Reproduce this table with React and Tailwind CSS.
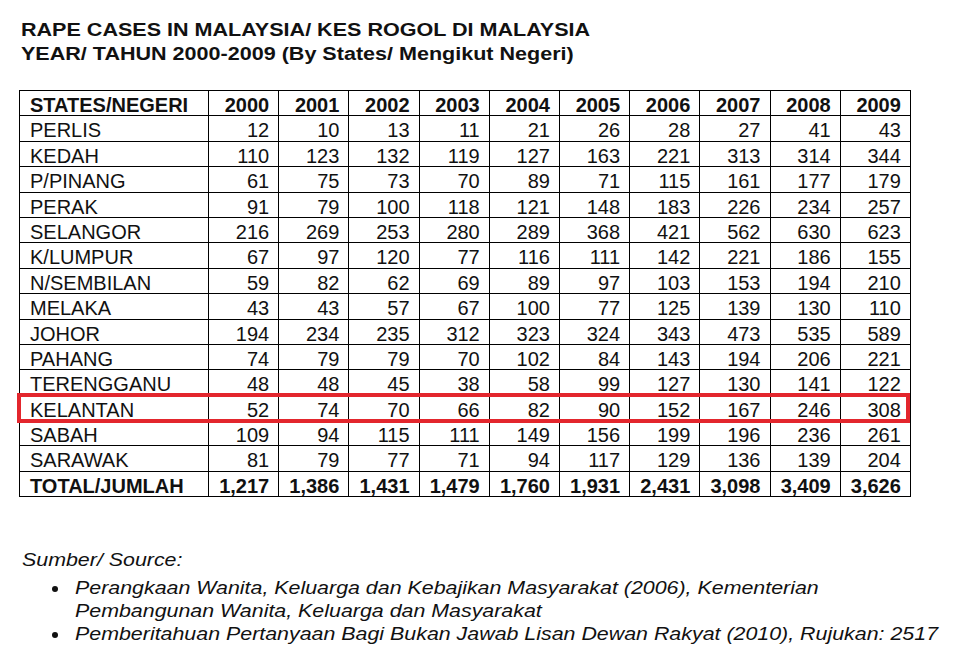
import React from "react";

const years = ["2000", "2001", "2002", "2003", "2004", "2005", "2006", "2007", "2008", "2009"];

const rows = [
    ["PERLIS", 12, 10, 13, 11, 21, 26, 28, 27, 41, 43],
    ["KEDAH", 110, 123, 132, 119, 127, 163, 221, 313, 314, 344],
    ["P/PINANG", 61, 75, 73, 70, 89, 71, 115, 161, 177, 179],
    ["PERAK", 91, 79, 100, 118, 121, 148, 183, 226, 234, 257],
    ["SELANGOR", 216, 269, 253, 280, 289, 368, 421, 562, 630, 623],
    ["K/LUMPUR", 67, 97, 120, 77, 116, 111, 142, 221, 186, 155],
    ["N/SEMBILAN", 59, 82, 62, 69, 89, 97, 103, 153, 194, 210],
    ["MELAKA", 43, 43, 57, 67, 100, 77, 125, 139, 130, 110],
    ["JOHOR", 194, 234, 235, 312, 323, 324, 343, 473, 535, 589],
    ["PAHANG", 74, 79, 79, 70, 102, 84, 143, 194, 206, 221],
    ["TERENGGANU", 48, 48, 45, 38, 58, 99, 127, 130, 141, 122],
    ["KELANTAN", 52, 74, 70, 66, 82, 90, 152, 167, 246, 308],
    ["SABAH", 109, 94, 115, 111, 149, 156, 199, 196, 236, 261],
    ["SARAWAK", 81, 79, 77, 71, 94, 117, 129, 136, 139, 204],
];

const totals = ["1,217", "1,386", "1,431", "1,479", "1,760", "1,931", "2,431", "3,098", "3,409", "3,626"];

const cell = "h-[25.4px] border border-black p-0 pt-[4px] align-top";

function Bullet() {
    return <span className="mt-[9px] ml-[33px] mr-[17px] h-[6px] w-[6px] shrink-0 rounded-full bg-[#111]" />;
}

export default function App() {
    return (
        <div className="min-h-screen overflow-hidden bg-white pl-[19px] pt-[18px] font-['Liberation_Sans',Arial,sans-serif] text-[#111]">
            {/* Title */}
            <div className="ml-[2px] w-fit origin-left scale-x-[1.197] whitespace-nowrap text-[18px] font-bold leading-[24px]">
                <div>RAPE CASES IN MALAYSIA/ KES ROGOL DI MALAYSIA</div>
                <div>YEAR/ TAHUN 2000-2009 (By States/ Mengikut Negeri)</div>
            </div>

            {/* Table */}
            <div className="relative mt-[24px] w-[891px]">
                <table className="w-[891px] table-fixed border-collapse text-[20px] leading-[20px]">
                    <colgroup>
                        <col className="w-[189px]" />
                        {years.map((y) => (
                            <col key={y} className="w-[70.2px]" />
                        ))}
                    </colgroup>
                    <thead>
                        <tr>
                            <th className={`${cell} pl-[10px] text-left font-bold`}>STATES/NEGERI</th>
                            {years.map((y) => (
                                <th key={y} className={`${cell} pr-[9px] text-right font-bold`}>
                                    {y}
                                </th>
                            ))}
                        </tr>
                    </thead>
                    <tbody>
                        {rows.map(([state, ...vals]) => (
                            <tr key={state}>
                                <td className={`${cell} pl-[10px] text-left`}>{state}</td>
                                {vals.map((v, i) => (
                                    <td key={i} className={`${cell} pr-[9px] text-right`}>
                                        {v}
                                    </td>
                                ))}
                            </tr>
                        ))}
                        <tr>
                            <td className={`${cell} pl-[10px] text-left font-bold`}>TOTAL/JUMLAH</td>
                            {totals.map((t, i) => (
                                <td key={i} className={`${cell} pr-[9px] text-right font-bold`}>
                                    {t}
                                </td>
                            ))}
                        </tr>
                    </tbody>
                </table>

                {/* highlight round Kelantan */}
                <div className="pointer-events-none absolute left-[-2px] top-[303px] h-[30px] w-[893px] border-4 border-[#e3262d]" />
            </div>

            {/* Source */}
            <div className="mt-[52px] text-[18px] italic leading-[23px]">
                <div className="ml-[3px] w-fit origin-left scale-x-[1.188] whitespace-nowrap">Sumber/ Source:</div>
                <ul className="mt-[5px]">
                    <li className="flex">
                        <Bullet />
                        <div className="w-fit origin-left scale-x-[1.188] whitespace-nowrap">
                            <div>Perangkaan Wanita, Keluarga dan Kebajikan Masyarakat (2006), Kementerian</div>
                            <div>Pembangunan Wanita, Keluarga dan Masyarakat</div>
                        </div>
                    </li>
                    <li className="flex">
                        <Bullet />
                        <div className="w-fit origin-left scale-x-[1.188] whitespace-nowrap">
                            Pemberitahuan Pertanyaan Bagi Bukan Jawab Lisan Dewan Rakyat (2010), Rujukan: 2517
                        </div>
                    </li>
                </ul>
            </div>
        </div>
    );
}
